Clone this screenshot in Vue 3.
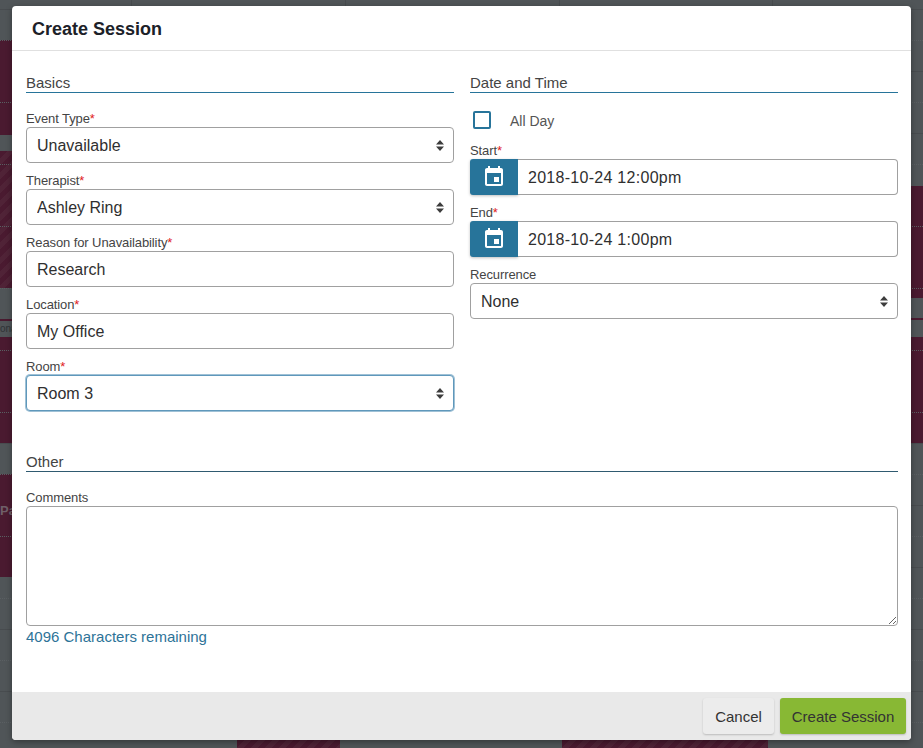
<script setup>
const events = [
  { x: 0, y: 40, w: 12, h: 95 },
  { x: 0, y: 151, w: 12, h: 137, striped: true },
  { x: 0, y: 319, w: 12, h: 2 },
  { x: 0, y: 337, w: 12, h: 106 },
  { x: 0, y: 474, w: 12, h: 103 },
  { x: 911, y: 186, w: 12, h: 112 },
  { x: 911, y: 318, w: 12, h: 2 },
  { x: 911, y: 337, w: 12, h: 106 },
  { x: 237, y: 740, w: 103, h: 8, striped: true },
  { x: 562, y: 740, w: 206, h: 8, striped: true }
]
const columns = [131, 345, 559, 772]
const dotted = Array.from({ length: 12 }, (_, i) => 40 + i * 62)
const leftFields = [
  { label: 'Event Type', kind: 'select', value: 'Unavailable' },
  { label: 'Therapist', kind: 'select', value: 'Ashley Ring' },
  { label: 'Reason for Unavailability', kind: 'input', value: 'Research' },
  { label: 'Location', kind: 'input', value: 'My Office' },
  { label: 'Room', kind: 'select', value: 'Room 3', focused: true }
]
const dateFields = [
  { label: 'Start', value: '2018-10-24 12:00pm' },
  { label: 'End', value: '2018-10-24 1:00pm' }
]
</script>

<template>
  <div class="page">
    <div
      v-for="(e, i) in events"
      :key="'e' + i"
      class="event"
      :class="{ striped: e.striped }"
      :style="{ left: e.x + 'px', top: e.y + 'px', width: e.w + 'px', height: e.h + 'px' }"
    ></div>
    <div v-for="c in columns" :key="'c' + c" class="col-line" :style="{ left: c + 'px' }"></div>
    <div v-for="d in dotted" :key="'d' + d" class="dot-line" :style="{ top: d + 'px' }"></div>
    <span class="bg-text ona">ona</span>
    <span class="bg-text pa">Pa</span>

    <div class="modal">
      <header class="modal-header"><h1>Create Session</h1></header>
      <div class="modal-body">
        <div class="columns">
          <section class="column">
            <h2 class="section-title">Basics</h2>
            <div v-for="f in leftFields" :key="f.label" class="field">
              <label class="label">{{ f.label }}<span class="req">*</span></label>
              <div v-if="f.kind === 'select'" class="select-wrap">
                <select class="control" :class="{ focused: f.focused }">
                  <option>{{ f.value }}</option>
                </select>
                <svg class="arrows" width="8" height="11" viewBox="0 0 8 11"><path d="M4 0l4 4.500H0zM4 11L0 6.500h8z" /></svg>
              </div>
              <input v-else class="control text-input" type="text" :value="f.value" />
            </div>
          </section>

          <section class="column">
            <h2 class="section-title">Date and Time</h2>
            <div class="allday">
              <span class="checkbox"></span>
              <span class="allday-text">All Day</span>
            </div>
            <div v-for="f in dateFields" :key="f.label" class="field">
              <label class="label">{{ f.label }}<span class="req">*</span></label>
              <div class="date-group">
                <span class="date-btn">
                  <svg width="24" height="24" viewBox="0 0 24 24"><path fill="#fff" d="M17 12h-5v5h5v-5zM16 1v2H8V1H6v2H5c-1.110 0-1.990.9-1.990 2L3 19c0 1.100.89 2 2 2h14c1.100 0 2-.9 2-2V5c0-1.100-.9-2-2-2h-1V1h-2zm3 18H5V8h14v11z" /></svg>
                </span>
                <input class="control text-input date-input" type="text" :value="f.value" />
              </div>
            </div>
            <div class="field">
              <label class="label">Recurrence</label>
              <div class="select-wrap">
                <select class="control"><option>None</option></select>
                <svg class="arrows" width="8" height="11" viewBox="0 0 8 11"><path d="M4 0l4 4.500H0zM4 11L0 6.500h8z" /></svg>
              </div>
            </div>
          </section>
        </div>

        <section class="other">
          <h2 class="section-title dark">Other</h2>
          <label class="label">Comments</label>
          <textarea class="comments"></textarea>
          <div class="remaining">4096 Characters remaining</div>
        </section>
      </div>
      <footer class="modal-footer">
        <button class="btn cancel">Cancel</button>
        <button class="btn create">Create Session</button>
      </footer>
    </div>
  </div>
</template>

<style scoped>
.page {
  position: relative;
  width: 923px;
  height: 748px;
  overflow: hidden;
  padding: 6px 12px 8px;
  box-sizing: border-box;
  font-family: "Liberation Sans", Arial, sans-serif;
  background-color: #505558;
  background-image: repeating-linear-gradient(180deg, transparent 0, transparent 9px, #484c4f 9px, #484c4f 10px, transparent 10px, transparent 62px);
}
.event {
  position: absolute;
  background: #4a1a30;
}
.striped {
  background: repeating-linear-gradient(135deg, #4a1a30 0, #4a1a30 5px, #502337 5px, #502337 10px);
}
.col-line {
  position: absolute;
  top: 0;
  width: 1px;
  height: 6px;
  background: #484c4f;
}
.dot-line {
  position: absolute;
  left: 0;
  width: 100%;
  border-top: 1px dotted #5a5f62;
}
.bg-text {
  position: absolute;
  font-size: 10px;
}
.ona { left: 0; top: 323px; color: #2f3336; }
.pa { left: 0; top: 503px; color: #6f5f68; font-weight: bold; font-size: 13px; }

.modal {
  position: relative;
  display: flex;
  flex-direction: column;
  height: 734px;
  background: #fff;
  border-radius: 4px;
  overflow: hidden;
  box-shadow: 0 2px 6px rgba(0, 0, 0, 0.35);
}
.modal-header {
  height: 42px;
  padding: 2px 0 0 20px;
  border-bottom: 1px solid #e0e0e0;
  display: flex;
  align-items: center;
  flex: none;
}
h1 {
  margin: 0;
  font-size: 18px;
  font-weight: bold;
  color: #1c2128;
}
.modal-body {
  flex: 1;
  padding: 21px 13px 0 14px;
}
.columns {
  display: flex;
  gap: 16px;
}
.column {
  flex: 1;
  min-width: 0;
}
.section-title {
  margin: 0 0 16px;
  height: 20px;
  line-height: 21px;
  font-size: 15px;
  font-weight: normal;
  color: #444;
  border-bottom: 1px solid #27749a;
  box-sizing: content-box;
}
.section-title.dark {
  border-bottom-color: #2f5a70;
}
.field {
  margin-bottom: 8px;
}
.label {
  display: block;
  height: 18px;
  line-height: 19px;
  font-size: 13px;
  letter-spacing: -0.1px;
  color: #444;
}
.req {
  color: #e02020;
}
.control {
  display: block;
  width: 100%;
  height: 36px;
  box-sizing: border-box;
  padding: 0 10px;
  border: 1px solid #a0a0a0;
  border-radius: 4px;
  background: #fff;
  font-family: inherit;
  font-size: 16px;
  color: #2f2f2f;
  outline: none;
  appearance: none;
  -webkit-appearance: none;
}
.text-input {
  padding-top: 2px;
}
.control.focused {
  border-color: #5f98bb;
  box-shadow: 0 0 0 1px rgba(95, 152, 187, 0.6);
}
.select-wrap {
  position: relative;
}
.arrows {
  position: absolute;
  right: 10px;
  top: 13px;
  fill: #3d3d3d;
  pointer-events: none;
}
.allday {
  display: flex;
  align-items: center;
  height: 18px;
  margin: 18px 0 12px 3px;
}
.checkbox {
  width: 18px;
  height: 18px;
  box-sizing: border-box;
  border: 2px solid #27749a;
  border-radius: 2px;
}
.allday-text {
  margin-left: 19px;
  font-size: 14px;
  color: #555;
  position: relative;
  top: 1px;
}
.date-group {
  display: flex;
}
.date-btn {
  flex: none;
  width: 48px;
  height: 36px;
  display: flex;
  align-items: center;
  justify-content: center;
  background: #27749a;
  border-radius: 3px 0 0 3px;
  box-shadow: 0 1px 3px rgba(0, 0, 0, 0.25);
}
.date-input {
  flex: 1;
  min-width: 0;
  border-left: none;
  border-radius: 0 4px 4px 0;
  letter-spacing: 0.28px;
}
.other {
  margin-top: 32px;
}
.comments {
  display: block;
  width: 100%;
  height: 120px;
  box-sizing: border-box;
  border: 1px solid #a0a0a0;
  border-radius: 4px;
  outline: none;
  font-family: inherit;
}
.remaining {
  margin-top: 2px;
  height: 18px;
  line-height: 18px;
  font-size: 15px;
  color: #2d7398;
}
.modal-footer {
  flex: none;
  height: 48px;
  box-sizing: border-box;
  padding: 6px 5px 6px 0;
  background: #e9e9e9;
  display: flex;
  justify-content: flex-end;
  gap: 6px;
}
.btn {
  height: 36px;
  padding: 0 12px;
  border: none;
  border-radius: 3px;
  font-family: inherit;
  font-size: 15px;
  color: #333;
  box-shadow: 0 1px 2px rgba(0, 0, 0, 0.2);
}
.cancel {
  background: #ececec;
  width: 71px;
  padding: 0;
}
.create {
  background: #88b834;
  width: 126px;
  padding: 0;
}
</style>

<style>
html, body {
  margin: 0;
  background: #505558;
}
</style>
